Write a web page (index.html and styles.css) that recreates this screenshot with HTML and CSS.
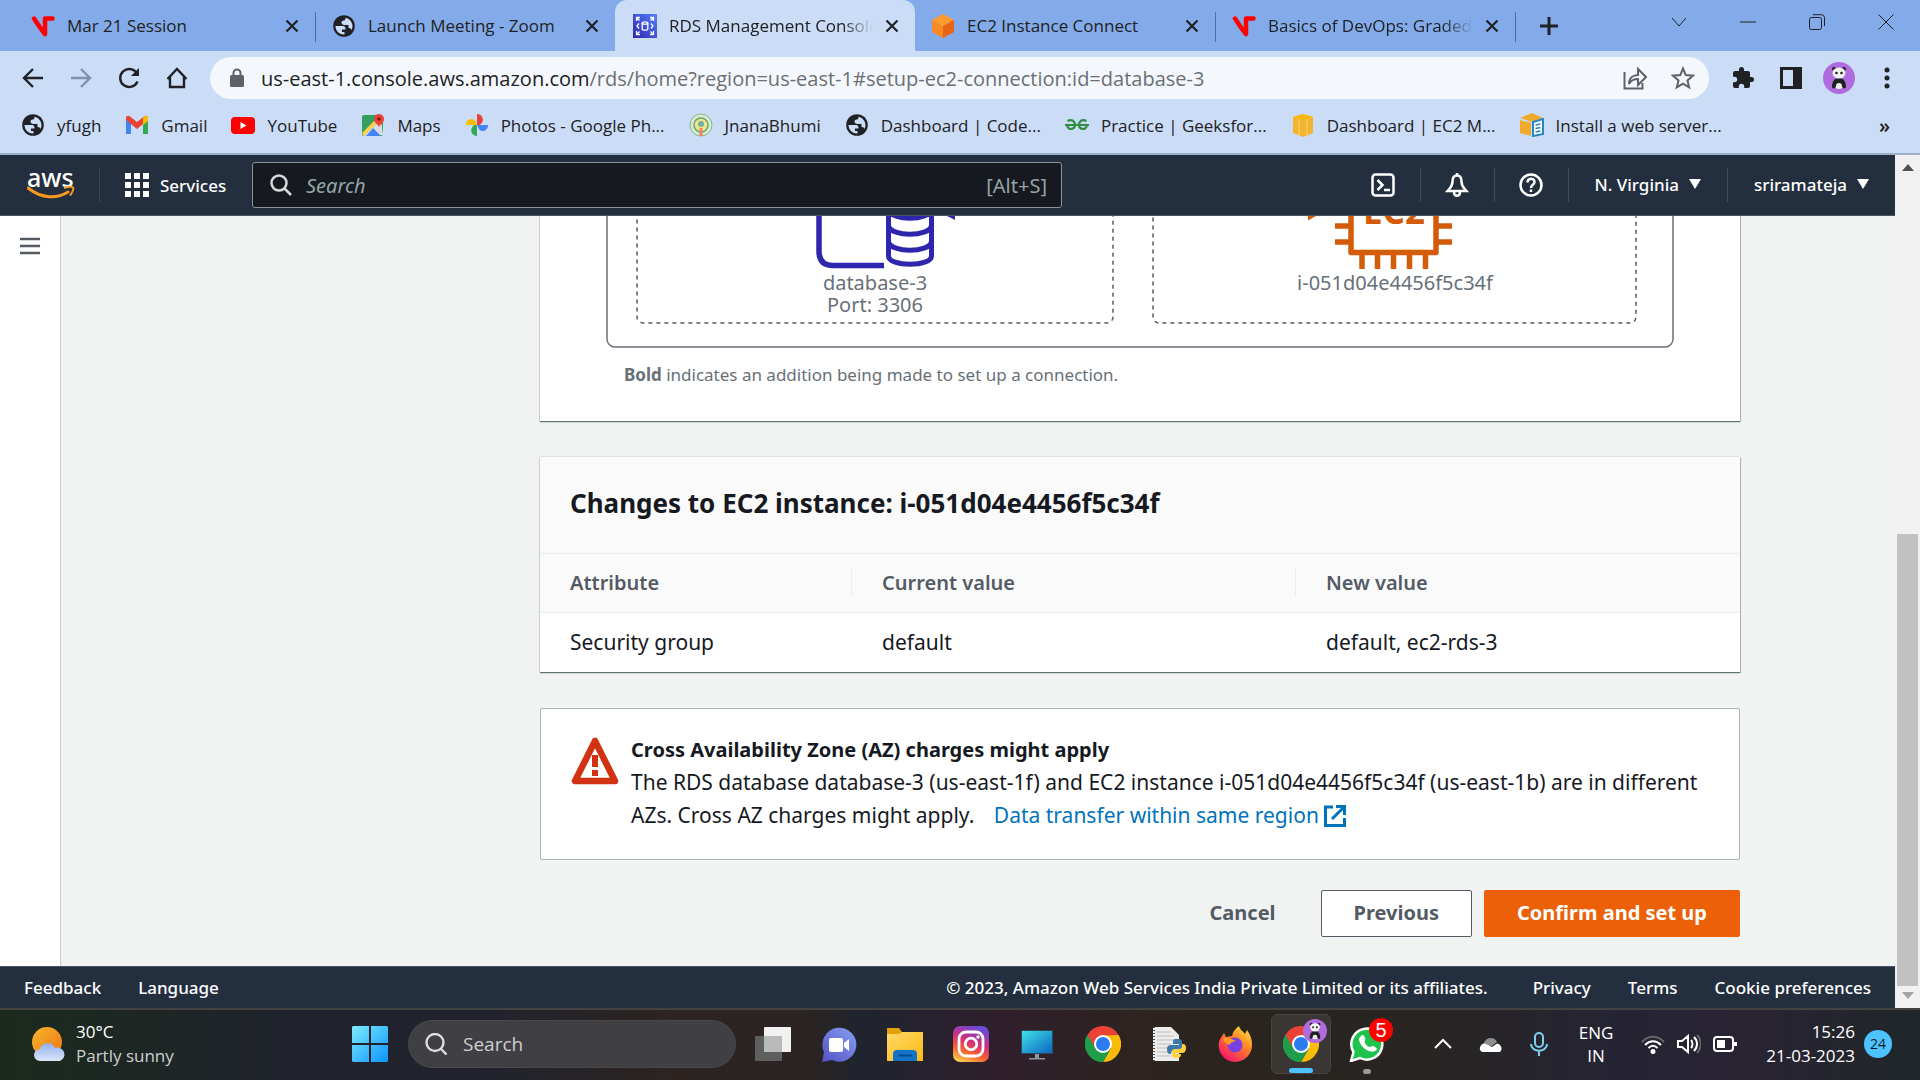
FILE: index.html
```html
<!DOCTYPE html>
<html lang="en">
<head>
<meta charset="utf-8">
<title>RDS Management Console</title>
<link rel="stylesheet" href="styles.css">
</head>
<body>
<svg class="defs" aria-hidden="true">
  <defs>
    <symbol id="globe" viewBox="0 0 24 24"><circle cx="12" cy="12" r="10.800" fill="#202124"/><path d="M3.500 12h7.500c2 0 2.500 1.500 2.500 3.500H10v2.500h2.500v2.500C7.500 21 3.500 17 3.500 12z" fill="#cbdcf7"/><path d="M13.500 3.700c4 .8 7 4.300 7 8.300 0 1.500-.3 2.800-1 4-.5-1.500-1.500-2-3-2v-3h-4c-2 0-3-1-3-2.500 0-1.300 1-2 2.500-2 1 0 1.500-1 1.500-2.800z" fill="#cbdcf7"/></symbol>
    <symbol id="vmark" viewBox="0 0 24 24"><path d="M3 4.500C6 9 9 14 14 20V4.500H21.500" fill="none" stroke="#f00" stroke-width="4.500" stroke-linecap="round" stroke-linejoin="round"/></symbol>
    <symbol id="close" viewBox="0 0 14 14"><path d="M1.500 1.500l11 11M12.500 1.500l-11 11" stroke="#202124" stroke-width="2.200" fill="none"/></symbol>
    <symbol id="chrome" viewBox="0 0 36 36"><path d="M18 18L2.400 9A18 18 0 0 1 33.600 9z" fill="#ea4335"/><path d="M18 18L18 36A18 18 0 0 1 2.400 9z" fill="#1e9e4a"/><path d="M18 9H33.600A18 18 0 0 1 18 36L25.800 22.500z" fill="#fbbc05"/><path d="M2.400 9h31.200L18 9.500 10 22z" fill="#ea4335"/><path d="M2.400 9l7.800 13.500L18 27l7.800-4.500L18 36A18 18 0 0 1 2.400 9z" fill="#1e9e4a"/><circle cx="18" cy="18" r="9" fill="#fff"/><circle cx="18" cy="18" r="7" fill="#2a7cf0"/></symbol>
    <symbol id="panda" viewBox="0 0 32 32"><circle cx="16" cy="16" r="16" fill="#b06be0"/><ellipse cx="16" cy="22" rx="6" ry="5" fill="#eee"/><path d="M9 25c0-5 2-9 7-9s7 4 7 9c0 2-4 2-4-1 0-2-1-3-3-3s-3 1-3 3c0 3-4 3-4 1z" fill="#202020"/><circle cx="11" cy="7" r="2" fill="#222"/><circle cx="21" cy="7" r="2" fill="#222"/><ellipse cx="16" cy="11" rx="6.500" ry="5.500" fill="#f2f2f2"/><circle cx="13.500" cy="11" r="1.300" fill="#222"/><circle cx="18.500" cy="11" r="1.300" fill="#222"/></symbol>
    <linearGradient id="gRds" x1="0" y1="1" x2="1" y2="0"><stop offset="0" stop-color="#2e27ad"/><stop offset="1" stop-color="#527fff"/></linearGradient>
    <linearGradient id="gWin" x1="0" y1="0" x2="1" y2="1"><stop offset="0" stop-color="#7eebff"/><stop offset="1" stop-color="#0a93fb"/></linearGradient>
    <linearGradient id="gSun" x1="0" y1="0" x2="1" y2="1"><stop offset="0" stop-color="#f5b82e"/><stop offset="1" stop-color="#ef7311"/></linearGradient>
    <linearGradient id="gCloud" x1="0" y1="0" x2="0" y2="1"><stop offset="0" stop-color="#8fb0ee"/><stop offset="1" stop-color="#dbe6fb"/></linearGradient>
    <linearGradient id="gTeams" x1="0" y1="1" x2="1" y2="0"><stop offset="0" stop-color="#5351c4"/><stop offset="1" stop-color="#86a0ef"/></linearGradient>
    <linearGradient id="gFold" x1="0" y1="0" x2="1" y2="1"><stop offset="0" stop-color="#ffd968"/><stop offset="1" stop-color="#fcb915"/></linearGradient>
    <linearGradient id="gMon" x1="0" y1="0" x2="1" y2="1"><stop offset="0" stop-color="#3fe0e8"/><stop offset="1" stop-color="#0b67c2"/></linearGradient>
    <linearGradient id="gInsta" x1="0.200" y1="1" x2="0.600" y2="0"><stop offset="0" stop-color="#fdd04f"/><stop offset="0.300" stop-color="#f8632f"/><stop offset="0.600" stop-color="#d42d7d"/><stop offset="1" stop-color="#6a4ad8"/></linearGradient>
    <linearGradient id="gFox" x1="1" y1="0" x2="0.300" y2="1"><stop offset="0" stop-color="#fff04a"/><stop offset="0.450" stop-color="#ff8a24"/><stop offset="1" stop-color="#f5156c"/></linearGradient>
  </defs>
</svg>

<div class="browser">
  <div class="tabstrip">
    <div class="tab"><svg class="fav"><use href="#vmark"/></svg><span class="tab-title">Mar 21 Session</span><button class="tab-close" aria-label="Close tab"><svg><use href="#close"/></svg></button></div>
    <div class="tab lined"><svg class="fav"><use href="#globe"/></svg><span class="tab-title">Launch Meeting - Zoom</span><button class="tab-close" aria-label="Close tab"><svg><use href="#close"/></svg></button></div>
    <div class="tab active"><svg class="fav" viewBox="0 0 24 24"><rect width="24" height="24" fill="url(#gRds)"/><g fill="none" stroke="#fff" stroke-width="1.300"><path d="M3.500 7V3.500H7M3.500 3.500L6.500 6.500M17 3.500h3.500V7M20.500 3.500L17.500 6.500M3.500 17v3.500H7M3.500 20.500L6.500 17.500M20.500 17v3.500H17M20.500 20.500L17.500 17.500M6 9.500L4 12l2 2.500M18 9.500l2 2.500-2 2.500"/><ellipse cx="12" cy="9" rx="2.800" ry="1.200"/><path d="M9.200 9v6c0 1.600 5.600 1.600 5.600 0V9"/></g></svg><span class="tab-title faded">RDS Management Console</span><button class="tab-close" aria-label="Close tab"><svg><use href="#close"/></svg></button></div>
    <div class="tab"><svg class="fav" viewBox="0 0 24 24"><path d="M12 0l11 6-11 6L1 6z" fill="#ff9a2e"/><path d="M1 6l11 6v12L1 18z" fill="#f88a24"/><path d="M23 6l-11 6v12l11-6z" fill="#ea6418"/></svg><span class="tab-title">EC2 Instance Connect</span><button class="tab-close" aria-label="Close tab"><svg><use href="#close"/></svg></button></div>
    <div class="tab lined"><svg class="fav"><use href="#vmark"/></svg><span class="tab-title faded">Basics of DevOps: Graded</span><button class="tab-close" aria-label="Close tab"><svg><use href="#close"/></svg></button></div>
    <button class="new-tab" aria-label="New tab"><svg viewBox="0 0 18 18"><path d="M9 0v18M0 9h18" stroke="#202124" stroke-width="3"/></svg></button>
    <div class="window-controls">
      <button aria-label="Tab search"><svg viewBox="0 0 16 16"><path d="M1 4l7 8 7-8"/></svg></button>
      <button aria-label="Minimize"><svg viewBox="0 0 16 16"><path d="M0 8h16"/></svg></button>
      <button aria-label="Restore"><svg viewBox="0 0 16 16"><rect x=".5" y="3.500" width="12" height="12" rx="2"/><path d="M4 .7h8.500a3 3 0 0 1 3 3V12"/></svg></button>
      <button aria-label="Close"><svg viewBox="0 0 16 16"><path d="M0.500 .5l15 15M15.500 .5l-15 15"/></svg></button>
    </div>
  </div>

  <div class="toolbar">
    <button aria-label="Back"><svg viewBox="0 0 24 24"><path d="M22 12H3M12 3l-9 9 9 9"/></svg></button>
    <button class="muted" aria-label="Forward"><svg viewBox="0 0 24 24"><path d="M2 12h19M12 3l9 9-9 9"/></svg></button>
    <button aria-label="Reload"><svg viewBox="0 0 24 24"><path d="M20.500 15.500a9 9 0 1 1-.5-8"/><path d="M22 2v8h-8z" fill="#202124" stroke="none"/></svg></button>
    <button aria-label="Home"><svg viewBox="0 0 24 24"><path d="M2.500 13L12 3l9.500 10M5 11v10h14V11"/></svg></button>
    <label class="omnibox">
      <svg class="lock" viewBox="0 0 16 20"><rect x="1" y="7" width="14" height="12" rx="1.500" fill="#5f6368"/><path d="M4.500 8V5a3.500 3.500 0 0 1 7 0v3" fill="none" stroke="#5f6368" stroke-width="2"/></svg>
      <span class="url" role="textbox" aria-label="Address">us-east-1.console.aws.amazon.com<span class="path">/rds/home?region=us-east-1#setup-ec2-connection:id=database-3</span></span>
      <svg class="omni-icon" viewBox="0 0 24 24"><path d="M1.500 6v16.500h18V17M6 18c0-6 4-9 9-9V3l8 8-8 8v-6c-4 0-7 1-9 5z"/></svg>
      <svg class="omni-icon" viewBox="0 0 24 24"><path d="M12 2.500l2.800 6.600 7.200.6-5.500 4.700 1.700 7L12 17.600l-6.200 3.800 1.700-7L2 9.700l7.200-.6z"/></svg>
    </label>
    <button class="solid" aria-label="Extensions"><svg viewBox="0 0 24 24"><path d="M20.500 11H19V7a2 2 0 0 0-2-2h-4V3.500a2.500 2.500 0 0 0-5 0V5H4a2 2 0 0 0-2 2v3.800h1.500a2.700 2.700 0 0 1 0 5.400H2V20a2 2 0 0 0 2 2h3.800v-1.500a2.700 2.700 0 0 1 5.400 0V22H17a2 2 0 0 0 2-2v-4h1.500a2.500 2.500 0 0 0 0-5z"/></svg></button>
    <button class="solid" aria-label="Side panel"><svg viewBox="0 0 24 24"><path fill-rule="evenodd" d="M1 1h22v22H1zM4 4v16h10V4z"/></svg></button>
    <button class="avatar" aria-label="Profile"><svg><use href="#panda"/></svg></button>
    <button class="solid" aria-label="Menu"><svg viewBox="0 0 24 24"><circle cx="12" cy="4" r="2.500"/><circle cx="12" cy="12" r="2.500"/><circle cx="12" cy="20" r="2.500"/></svg></button>
  </div>

  <nav class="bookmarks" aria-label="Bookmarks">
    <a href="#"><svg><use href="#globe"/></svg>yfugh</a>
    <a href="#"><svg viewBox="0 0 24 24"><path d="M1 21V5l5 4v12z" fill="#4285f4"/><path d="M18 21V9l5-4v16z" fill="#34a853"/><path d="M1 5c0-2 2-3 4-1.500l7 5.500 7-5.500C21 2 23 3 23 5v2l-11 9L1 7z" fill="#ea4335"/><path d="M18 5l1-1.500C21 2 23 3 23 5v3l-5 4z" fill="#fbbc04"/></svg>Gmail</a>
    <a href="#"><svg viewBox="0 0 24 24"><rect y="4" width="24" height="17" rx="4" fill="#f00"/><path d="M9.500 9v7l6-3.500z" fill="#fff"/></svg>YouTube</a>
    <a href="#"><svg viewBox="0 0 24 24"><rect x="1" y="2" width="21" height="21" rx="2" fill="#34a060"/><path d="M2 23L20 6l2 16z" fill="#d9dde2"/><path d="M5 23l7-8 8 8z" fill="#4285f4"/><path d="M1 20L17 4l2 3L3 23z" fill="#fdd04a"/><path d="M18 15c0-4-5-4-5-9a5 5 0 0 1 10 0c0 5-5 5-5 9z" fill="#ea4335"/><circle cx="18" cy="6" r="1.800" fill="#7b1d18"/></svg>Maps</a>
    <a href="#"><svg viewBox="0 0 24 24"><path d="M12 12V1a5.500 5.500 0 0 1 5 8.500L15 12z" fill="#ea4335"/><path d="M12 12h11a5.500 5.500 0 0 1-8.500 5z" fill="#4285f4"/><path d="M12 12v11a5.500 5.500 0 0 1-5-8.500L9 12z" fill="#34a853"/><path d="M12 12H1a5.500 5.500 0 0 1 8.500-5z" fill="#fbbc04"/></svg>Photos - Google Ph...</a>
    <a href="#"><svg viewBox="0 0 24 24"><circle cx="12" cy="12" r="11" fill="#d7ead0" stroke="#83b78b"/><circle cx="12" cy="12" r="7" fill="#f2e48d" stroke="#61a878" stroke-width="1.500"/><circle cx="12" cy="11" r="3" fill="#72b0a0"/><path d="M10.500 15h3v8h-3z" fill="#ee8262"/></svg>JnanaBhumi</a>
    <a href="#"><svg><use href="#globe"/></svg>Dashboard | Code...</a>
    <a href="#"><svg viewBox="0 0 24 24"><path d="M0 12h24M2.500 8c4.500-2 7.500 0 7.500 4s-5.500 6-8 1M21.500 8c-4.500-2-7.500 0-7.500 4s5.500 6 8 1" fill="none" stroke="#2f8d46" stroke-width="2.200"/></svg>Practice | Geeksfor...</a>
    <a href="#"><svg viewBox="0 0 24 24"><path d="M2 4l10-3 10 3v16l-10 4-10-4z" fill="#f4b52e"/><path d="M2 4l10-3 10 3-10 3z" fill="#fbb90c"/><path d="M8 6v16M16 6v16" stroke="#fbd383"/></svg>Dashboard | EC2 M...</a>
    <a href="#"><svg viewBox="0 0 24 24"><path d="M0 5l12-5 11 5-11 4zM0 7l11 3v13L0 20z" fill="#f0a92b"/><path d="M13 9l10-3v15l-10 2z" fill="#fff" stroke="#2586c4" stroke-width="2"/><path d="M15.500 12l5-1M15.500 15.500l5-1M15.500 19l5-1" stroke="#2586c4" stroke-width="1.500"/></svg>Install a web server...</a>
    <button class="overflow" aria-label="More bookmarks">»</button>
  </nav>
</div>

<div class="viewport">
  <div class="page">
    <header class="aws-header">
      <a class="logo" href="#" aria-label="aws home"><span>aws</span><svg viewBox="0 0 48 14"><path d="M1 2c14 11 29 11 40 4" fill="none" stroke="#f7981f" stroke-width="3" stroke-linecap="round"/><path d="M37 2c4-1 8-1.500 9-.5s-.5 5-3 8" fill="none" stroke="#f7981f" stroke-width="2"/></svg></a>
      <button class="services"><svg viewBox="0 0 24 24"><path d="M0 0h6v6H0zM9 0h6v6H9zM18 0h6v6h-6zM0 9h6v6H0zM9 9h6v6H9zM18 9h6v6h-6zM0 18h6v6H0zM9 18h6v6H9zM18 18h6v6h-6z" fill="#fff"/></svg>Services</button>
      <label class="aws-search"><svg viewBox="0 0 22 22"><circle cx="9" cy="9" r="7.500"/><path d="M14 14l7 7"/></svg><input type="text" placeholder="Search" aria-label="Search"><span>[Alt+S]</span></label>
      <div class="aws-tools">
        <button class="tool" aria-label="CloudShell"><svg viewBox="0 0 24 24"><rect x="1.500" y="1.500" width="21" height="21" rx="3"/><path d="M6.500 7l5 5-5 5M13 17h6"/></svg></button>
        <button class="tool" aria-label="Notifications"><svg viewBox="0 0 24 24"><path d="M12 2.500c-3.500 0-4.500 3-4.500 6 0 5-2 6-5 9.500h19c-3-3.500-5-4.500-5-9.500 0-3-1-6-4.500-6zM12 0v3M9 19c0 5 6 5 6 0"/></svg></button>
        <button class="tool" aria-label="Help"><svg viewBox="0 0 24 24"><circle cx="12" cy="12" r="10.500"/><path d="M8.500 9.500c0-5 7-5 7-.5 0 3-3.500 2.500-3.500 6M12 16.500v2.500"/></svg></button>
        <button class="menu">N. Virginia<i class="caret"></i></button>
        <button class="menu">sriramateja<i class="caret"></i></button>
      </div>
    </header>

    <div class="body">
      <aside class="side"><button aria-label="Open navigation"><svg viewBox="0 0 20 18"><path d="M0 2h20M0 9h20M0 16h20" stroke="#545b64" stroke-width="2.500"/></svg></button></aside>
      <main class="content">
        <div class="column">
          <section class="card connection">
            <svg class="diagram" viewBox="0 0 1068 192" role="img" aria-label="Connection diagram">
              <rect x="1" y="-20" width="1066" height="211" rx="8" fill="none" stroke="#687078" stroke-width="1.500"/>
              <g fill="none" stroke="#545b64" stroke-width="1.500" stroke-dasharray="4 4"><rect x="31" y="-20" width="476" height="187" rx="6"/><rect x="547" y="-20" width="483" height="187" rx="6"/></g>
              <g fill="none" stroke="#2e27ad" stroke-width="5"><path d="M213 0v95q0 14.500 14 14.500h51" stroke-width="5.500"/><path d="M282.500 0v100c0 11 43 11 43 0V0M282.500 54c3 11 40 11 43 0M282.500 70c3 11 40 11 43 0M282.500 86c3 11 40 11 43 0"/></g>
              <path d="M335 57l14 7V45z" fill="#2e27ad"/>
              <path d="M702 64.500l16-9-16-12z" fill="#d45b07"/>
              <g fill="none" stroke="#d45b07" stroke-width="5.500"><path d="M745 0v96.500h85V0" stroke-linejoin="round"/><path d="M729 70h16M729 86h16M830 70h16M830 86h16M756 97v16M771.500 97v16M787.500 97v16M803.500 97v16M819.500 97v16"/></g>
              <text class="chip" x="788" y="68">EC2</text>
              <text x="269" y="134">database-3</text><text x="269" y="156">Port: 3306</text>
              <text x="789" y="134">i-051d04e4456f5c34f</text>
            </svg>
            <p class="note"><b>Bold</b> indicates an addition being made to set up a connection.</p>
          </section>

          <section class="card changes">
            <h2>Changes to EC2 instance: i-051d04e4456f5c34f</h2>
            <table>
              <colgroup><col class="c-attr"><col class="c-val"><col class="c-val"></colgroup>
              <thead><tr><th>Attribute</th><th>Current value</th><th>New value</th></tr></thead>
              <tbody><tr><td>Security group</td><td>default</td><td>default, ec2-rds-3</td></tr></tbody>
            </table>
          </section>

          <section class="alert">
            <svg class="warn" viewBox="0 0 48 48"><path d="M24 4L4 44h40z" fill="none" stroke="#d13212" stroke-width="6.500" stroke-linejoin="round"/><path d="M24 18v12M24 33v6" stroke="#d13212" stroke-width="6"/></svg>
            <div><strong>Cross Availability Zone (AZ) charges might apply</strong>
            <p>The RDS database database-3 (us-east-1f) and EC2 instance i-051d04e4456f5c34f (us-east-1b) are in different AZs. Cross AZ charges might apply. <a href="#">Data transfer within same region <svg viewBox="0 0 22 22"><path d="M9 2H1.500v18.500h19V13M12 1.500h8.500V10M20 2L8 14" fill="none" stroke="#0073bb" stroke-width="3"/></svg></a></p></div>
          </section>

          <div class="actions">
            <button class="btn link">Cancel</button>
            <button class="btn">Previous</button>
            <button class="btn primary">Confirm and set up</button>
          </div>
        </div>
      </main>
    </div>

    <footer class="aws-footer">
      <a href="#">Feedback</a><a href="#">Language</a>
      <span class="copyright">© 2023, Amazon Web Services India Private Limited or its affiliates.</span>
      <a href="#">Privacy</a><a href="#">Terms</a><a href="#">Cookie preferences</a>
    </footer>
  </div>
  <div class="scrollbar" aria-hidden="true"><i class="up"></i><div class="track"><div class="thumb"></div></div><i class="down"></i></div>
</div>

<div class="taskbar">
  <div class="weather">
    <svg viewBox="0 0 36 36"><circle cx="16" cy="16" r="15" fill="url(#gSun)"/><path d="M9 35a6 6 0 0 1 0-12 8 8 0 0 1 15-1 6.500 6.500 0 0 1 5 13z" fill="url(#gCloud)"/></svg>
    <div><span class="temp">30°C</span><span class="sky">Partly sunny</span></div>
  </div>
  <button class="start" aria-label="Start"><svg viewBox="0 0 36 36"><path d="M1 0h16v17H0V1zM19 0h16l1 1v16H19zM0 19h17v17H1l-1-1zM19 19h17v16l-1 1H19z" fill="url(#gWin)"/></svg></button>
  <label class="task-search"><svg viewBox="0 0 22 22"><circle cx="10" cy="9.500" r="8.500"/><path d="M16 16l5.500 5.500"/></svg><input type="text" placeholder="Search" aria-label="Search"></label>
  <div class="apps">
    <button aria-label="Task view"><svg viewBox="0 0 36 36"><rect x="0" y="10" width="27" height="25" rx="1" fill="#5e5e5e"/><rect x="9" y="1" width="27" height="25" rx="1" fill="#f1f1f1"/><path d="M9 10h18v16H9z" fill="#b9b9b9"/></svg></button>
    <button aria-label="Chat"><svg viewBox="0 0 36 36"><path d="M1 36l2-10A17 17 0 1 1 11 34z" fill="url(#gTeams)"/><rect x="8" y="12" width="14" height="14" rx="2" fill="#fff"/><path d="M23 17l5-4v12l-5-4z" fill="#fff"/></svg></button>
    <button aria-label="File Explorer"><svg viewBox="0 0 36 36"><path d="M0 2h12l3 4h18v10H0z" fill="#e3a008"/><path d="M0 8h12l3-2h21v29H0z" fill="url(#gFold)"/><path d="M6 35V28a4 4 0 0 1 4-4h16a4 4 0 0 1 4 4v7z" fill="#1273c8"/><path d="M11 29.500h14" stroke="#0b4b8c" stroke-width="2"/></svg></button>
    <button aria-label="Instagram"><svg viewBox="0 0 36 36"><rect width="36" height="36" rx="7" fill="url(#gInsta)"/><rect x="6" y="6" width="24" height="24" rx="7" fill="none" stroke="#fff" stroke-width="2.800"/><circle cx="18" cy="18" r="5.800" fill="none" stroke="#fff" stroke-width="2.800"/><circle cx="25" cy="11" r="1.700" fill="#fff"/></svg></button>
    <button aria-label="Desktop"><svg viewBox="0 0 36 36"><rect x="2" y="4" width="32" height="24" fill="#2b4a5a"/><rect x="3" y="5" width="30" height="22" fill="url(#gMon)"/><path d="M16 28h4v4h6v1.500H10V32h6z" fill="#8b98a1"/></svg></button>
    <button aria-label="Chrome"><svg><use href="#chrome"/></svg></button>
    <button aria-label="Python IDLE"><svg viewBox="0 0 36 36"><path d="M2 1h18l8 8v26H2z" fill="#ececec"/><path d="M6 6h14M6 10h17M6 14h18M6 18h14M6 22h14M6 26h14M6 30h14" stroke="#bdbdbd"/><path d="M3 1v34" stroke="#555" stroke-dasharray="1 2" stroke-width="2"/><path d="M24 13h4q3 0 3 4v4q0 3-3 3h-5q-3 0-3 4h-1q-3 0-3-5 0-4 4-4h8v-1h-6v-2q0-3 2-3z" fill="#3a78ad"/><path d="M31 18h1q3 0 3 4 0 5-4 5h-7v1h6v1q0 3-5 3-4 0-4-3v-3q0-3 3-3h4q3 0 3-3z" fill="#ffd040"/></svg></button>
    <button aria-label="Firefox"><svg viewBox="0 0 36 36"><path d="M18 36A16.500 16.500 0 0 1 3 13l4-6 2 4 6-1c1-5 4-8 7-10 1 4 4 5 6 8l2-4c3 4 5 9 5 14A17 17 0 0 1 18 36z" fill="url(#gFox)"/><circle cx="18" cy="19" r="7.500" fill="#7a3fe0"/><path d="M6 12c5-1 8 1 13 3-3 1-6 1-6 4-4-1-6-3-7-7z" fill="#ff9a26"/></svg></button>
    <button class="running" aria-label="Chrome window"><svg><use href="#chrome"/></svg><svg class="profile" viewBox="0 0 32 32"><use href="#panda"/></svg></button>
    <button class="idle" aria-label="WhatsApp"><svg viewBox="0 0 36 36"><path d="M2 35l2.500-9A15.500 15.500 0 1 1 11 32z" fill="#1fc24f" stroke="#fff" stroke-width="2.500"/><path d="M12 10c2-2 3-1 4 2s-1 3 0 5 3 4 5 4 2-2 5 0 2 3 0 4c-6 3-16-5-16-12 0-1 1-2 2-3z" fill="#fff"/></svg><span class="badge">5</span></button>
  </div>
  <div class="tray">
    <button aria-label="Show hidden icons"><svg viewBox="0 0 24 24"><path d="M4 16l8-8 8 8"/></svg></button>
    <button aria-label="OneDrive"><svg viewBox="0 0 24 24"><path d="M5 20a5 5 0 0 1 0-9 7 7 0 0 1 13-1z" fill="#8e8e8e" stroke="none"/><path d="M3 20a4.500 4.500 0 0 1 4-8l6 3 5-3.500a5 5 0 0 1 3 8.500z" fill="#fff" stroke="none"/></svg></button>
    <button class="mic" aria-label="Microphone"><svg viewBox="0 0 24 24"><rect x="8" y="1" width="8" height="14" rx="4"/><path d="M4 12c0 9 16 9 16 0M12 19v5"/></svg></button>
    <button class="lang">ENG<br>IN</button>
    <button class="quick" aria-label="Network, sound, battery"><svg viewBox="0 0 24 24"><path d="M1 10c6-7 16-7 22 0" stroke="#666"/><path d="M4 13c5-5 11-5 16 0M7.500 16c3-3 6-3 9 0"/><circle cx="12" cy="19.500" r="1.500" fill="#fff"/></svg><svg viewBox="0 0 24 24"><path d="M1 9h4l6-5v16l-6-5H1zM14 8c2 2 2 6 0 8M17 5c4 4 4 10 0 14"/><path d="M20 3c5 5 5 13 0 18" stroke="#666"/></svg><svg viewBox="0 0 24 24"><rect x="1" y="5" width="19" height="14" rx="3"/><path d="M4 8h8v8H4z" fill="#fff" stroke="none"/><path d="M22.500 10v4" stroke-width="3"/></svg></button>
    <button class="clock">15:26<br>21-03-2023</button>
    <button class="count">24</button>
  </div>
</div>
</body>
</html>
```
FILE: styles.css
```css
* { box-sizing: border-box; }
html, body { height: 100%; }
body {
  margin: 0;
  display: flex;
  flex-direction: column;
  overflow: hidden;
  font-family: "Noto Sans", "Open Sans", sans-serif;
  font-size: 20px;
  color: #16191f;
}
button, input { font: inherit; color: inherit; background: none; border: 0; padding: 0; margin: 0; }
a { color: inherit; text-decoration: none; }
svg { flex: none; display: block; }
.defs { position: absolute; width: 0; height: 0; }

/* Browser chrome */
.browser, .taskbar { font-family: "Open Sans", "Noto Sans", sans-serif; color: #202124; }
.browser { flex: none; background: #cbdcf7; border-bottom: 2px solid #9fb0cb; }
.tabstrip { display: flex; height: 51px; padding-left: 15px; background: #84abe9; }
.tab { display: flex; align-items: center; flex: 0 1 300px; min-width: 0; height: 51px; padding: 0 16px 0 16px; }
.tab.lined { background: linear-gradient(#4c6ea8, #4c6ea8) left 12px / 1px 30px no-repeat; padding-left: 17px; }
.tab.active { background: #cbdcf7; border-radius: 12px 12px 0 0; padding-left: 18px; }
.tab .fav { width: 24px; height: 24px; margin-right: 12px; }
.tab-title { flex: 1; min-width: 0; overflow: hidden; white-space: nowrap; font-size: 17px; line-height: 26px; }
.tab-title.faded { mask-image: linear-gradient(90deg, #000 85%, transparent); }
.tab-close { margin-left: 12px; }
.tab-close svg { width: 14px; height: 14px; }
.new-tab { width: 66px; padding: 0 0 0 25px; background: linear-gradient(#4c6ea8, #4c6ea8) left 12px / 1px 30px no-repeat; }
.new-tab svg { width: 18px; height: 18px; }
.window-controls { margin-left: auto; display: flex; height: 44px; }
.window-controls button { width: 69px; display: grid; place-items: center; }
.window-controls svg { width: 16px; height: 16px; fill: none; stroke: #202124; stroke-width: 1; }

.toolbar { display: flex; align-items: center; height: 54px; padding: 0 9px; }
.toolbar button { width: 48px; display: grid; place-items: center; }
.toolbar button svg { width: 24px; height: 24px; fill: none; stroke: #202124; stroke-width: 2.4; }
.toolbar .muted svg { stroke: #8091ae; }
.toolbar .solid svg { fill: #202124; stroke: none; }
.toolbar .avatar svg { width: 32px; height: 32px; stroke: none; }
.omnibox { flex: 1; display: flex; align-items: center; gap: 24px; height: 42px; margin: 0 10px 0 9px; padding: 0 14px 0 19px; border-radius: 21px; background: #f4f8fd; }
.omnibox .lock { width: 16px; height: 20px; }
.url { flex: 1; font-size: 20px; white-space: nowrap; margin-left: -8px; }
.url .path { color: #6b6f75; }
.omni-icon { width: 24px; height: 24px; fill: none; stroke: #5f6368; stroke-width: 2; }

.bookmarks { display: flex; align-items: center; gap: 24px; height: 48px; padding: 0 30px 8px 21px; font-size: 17px; }
.bookmarks a { display: flex; align-items: center; gap: 12px; white-space: nowrap; }
.bookmarks svg { width: 24px; height: 24px; }
.bookmarks .overflow { margin-left: auto; font-size: 20px; font-weight: 600; }

/* Console page */
.viewport { flex: 1; min-height: 0; display: flex; }
.page { flex: 1; min-width: 0; display: flex; flex-direction: column; }
.aws-header { flex: none; display: flex; align-items: center; height: 61px; background: #232f3e; border-bottom: 1px solid #4b5563; color: #fff; font-size: 17px; font-weight: 500; }
.logo { width: 100px; padding-left: 27px; border-right: 1px solid #3c4756; height: 34px; }
.logo span { display: block; font-size: 25px; font-weight: 500; line-height: 18px; }
.logo svg { width: 48px; height: 14px; }
.services { display: flex; align-items: center; gap: 11px; width: 152px; padding-left: 25px; }
.services svg { width: 24px; height: 24px; }
.aws-search { display: flex; align-items: center; gap: 14px; flex: 0 1 810px; height: 46px; padding: 0 14px 0 17px; border: 1px solid #879596; border-radius: 3px; background: #16191f; color: #95a5a6; font-size: 20px; font-weight: 400; }
.aws-search svg { width: 22px; height: 22px; fill: none; stroke: #d5dbdb; stroke-width: 2.5; }
.aws-search input { flex: 1; min-width: 0; font-style: italic; }
input::placeholder { color: inherit; opacity: 1; }
.aws-tools { margin-left: auto; display: flex; }
.aws-tools button { height: 34px; border-left: 1px solid #414d5c; }
.aws-tools .tool:first-child { border-color: transparent; }
.tool { width: 74px; display: grid; place-items: center; }
.tool svg { width: 24px; height: 24px; fill: none; stroke: #fff; stroke-width: 2.5; }
.aws-tools .menu { display: flex; align-items: center; gap: 10px; padding: 0 26px 2px; }
.caret { border: 6px solid transparent; border-top: 10px solid #fff; border-bottom: 0; }

.body { flex: 1; min-height: 0; display: flex; background: #f1f3f3; }
.side { flex: none; width: 61px; background: #fff; border-right: 1px solid #c5cbcc; padding: 21px 20px; }
.side button { display: block; }
.side svg { width: 20px; height: 18px; }
.content { flex: 1; display: flex; flex-direction: column; justify-content: flex-end; overflow: hidden; padding: 0 155px 29px 479px; }
.column { width: 100%; display: flex; flex-direction: column; gap: 36px; }
.card { background: #fff; box-shadow: 0 1px 1px #5f7475, 0 0 1px #879596, 1px 1px 1px #c5cdcd; }
.connection { padding: 0 66px 33px; }
.diagram { width: 100%; height: auto; }
.diagram text { font-size: 20px; fill: #687078; text-anchor: middle; }
.diagram .chip { font-size: 35px; font-weight: 700; fill: #d45b07; }
.note { margin: 14px 0 0; padding-left: 18px; font-size: 17px; line-height: 26px; color: #687078; }
.changes h2 { margin: 0; padding: 28px 30px 32px; font-size: 26px; line-height: 36px; font-weight: 700; background: #fafafa; border-bottom: 1px solid #eaeded; }
.changes table { width: 100%; table-layout: fixed; border-collapse: collapse; line-height: 24px; }
.c-attr { width: 312px; }
.changes th, .changes td { height: 58px; padding: 0 30px; text-align: left; }
.changes td { height: 60px; }
.changes th { color: #545b64; font-weight: 600; background: linear-gradient(#eaeded, #eaeded) right / 1px 28px no-repeat; }
.changes th:last-child { background: none; }
.changes thead { background: #fafafa; border-bottom: 1px solid #eaeded; }
.alert { display: flex; gap: 12px; padding: 24px 30px; border: 1px solid #aab7b8; border-radius: 2px; background: #fff; line-height: 33px; min-height: 152px; }
.warn { width: 48px; height: 48px; margin-top: 4px; }
.alert strong { font-weight: 700; }
.alert p { margin: 0; }
.alert p, .changes td { font-size: 21px; }
.alert a { color: #0073bb; margin-left: 14px; }
.alert a svg { display: inline-block; vertical-align: -4px; width: 22px; height: 22px; }
.actions { display: flex; justify-content: flex-end; gap: 12px; margin-top: -6px; }
.btn { height: 47px; padding: 0 32px 2px; border: 1px solid #545b64; border-radius: 2px; background: #fff; color: #545b64; font-weight: 700; }
.btn.link { background: none; border-color: transparent; }
.btn.primary { background: #ec6108; border-color: #ec6108; color: #fff; }

.aws-footer { flex: none; display: flex; align-items: center; gap: 37px; height: 42px; padding: 0 24px; background: #232f3e; border-top: 1px solid #4b5563; color: #fff; font-size: 17px; font-weight: 500; white-space: nowrap; }
.copyright { margin: 0 8px 0 auto; }

.scrollbar { flex: none; width: 25px; display: flex; flex-direction: column; align-items: center; justify-content: space-between; padding: 9px 2px; background: #f1f1f1; }
.track { flex: 1; width: 100%; margin: 8px 0 6px; display: flex; align-items: flex-end; }
.thumb { width: 100%; height: 56%; background: #c1c1c1; }
.up, .down { border: 6px solid transparent; }
.up { border-top: 0; border-bottom: 7px solid #505050; }
.down { border-bottom: 0; border-top: 7px solid #a3a3a3; }

/* Taskbar */
.taskbar { flex: none; display: flex; align-items: center; height: 72px; padding: 0 28px 2px 31px; border-top: 2px solid #444241; color: #fff; font-size: 17px;
  background: linear-gradient(90deg, #1c2a1d, #20232c 15%, #20232d 25%, #2d2422 35%, #2b2422 42%, #1f242f 45%, #2f1f2c 52%, #2d241f 60%, #29241e 66%, #282524 75%, #252433 84%, #292332 91%, #20272a); }
.weather { display: flex; gap: 9px; width: 321px; align-items: center; }
.weather svg { width: 36px; height: 36px; }
.weather span { display: block; line-height: 24px; }
.sky { color: #cfcfcf; }
.start svg { width: 36px; height: 36px; }
.task-search { display: flex; align-items: center; gap: 16px; width: 328px; height: 48px; margin-left: 20px; padding: 0 16px; border: 1px solid #4a4747; border-radius: 24px; background: #403f43; color: #cfcfcf; font-size: 19px; }
.task-search svg { width: 22px; height: 22px; fill: none; stroke: #ddd; stroke-width: 2.4; }
.task-search input { min-width: 0; width: 100%; }
.apps { display: flex; gap: 6px; margin-left: 7px; }
.apps button { position: relative; width: 60px; height: 60px; display: grid; place-items: center; border-radius: 6px; }
.apps svg { width: 36px; height: 36px; }
.apps .running { background: #393633; border: 1px solid #474441; }
.apps .profile { position: absolute; right: 3px; top: 4px; width: 24px; height: 24px; }
.running::after, .idle::after { content: ""; position: absolute; bottom: 0; width: 24px; height: 5px; border-radius: 3px; background: #4cc2ff; }
.idle::after { width: 8px; background: #9a9a9a; }
.badge { position: absolute; right: 4px; top: 4px; width: 24px; height: 24px; border-radius: 50%; background: #f00; font: 20px/24px "Liberation Sans", sans-serif; }
.tray { margin-left: auto; display: flex; align-items: center; line-height: 24px; }
.tray button { min-width: 48px; display: flex; justify-content: center; align-items: center; }
.tray svg { width: 24px; height: 24px; fill: none; stroke: #fff; stroke-width: 2; }
.tray .mic svg { stroke: #7fd0ee; }
.tray .lang { display: block; width: 66px; line-height: 23px; }
.tray .quick { gap: 12px; padding: 0 12px; }
.tray .clock { display: block; width: 106px; text-align: right; }
.tray .count { min-width: 28px; width: 28px; height: 28px; margin-left: 9px; border-radius: 50%; background: #4cc2ff; color: #16191f; font-size: 14px; }
```
